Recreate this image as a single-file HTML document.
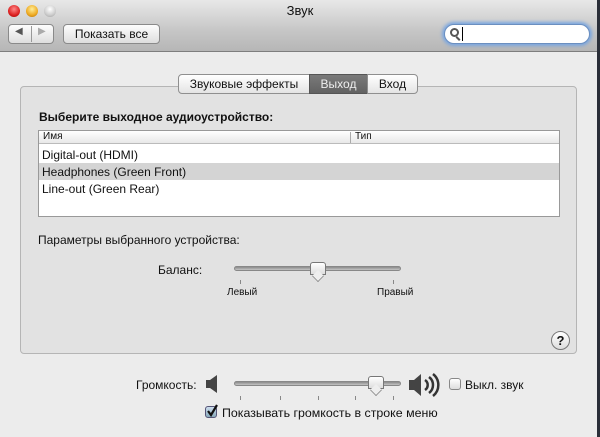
<!DOCTYPE html><html><head><meta charset="utf-8"><style>
*{margin:0;padding:0;box-sizing:border-box}
body{width:600px;height:437px;overflow:hidden;background:#ececec;font-family:"Liberation Sans","DejaVu Sans",sans-serif;font-size:12px;color:#111;position:relative}
.a{position:absolute;white-space:nowrap}
.tb{left:0;top:0;width:600px;height:52px;background:linear-gradient(#e8e8e8,#c6c6c6 60%,#b6b6b6);border-bottom:1px solid #7e7e7e}
.dot{width:12px;height:12px;border-radius:50%;top:5px}
.btn{background:linear-gradient(#fdfdfd,#dedede);border:1px solid #8a8a8a;border-radius:4px}
.grp{left:20px;top:86px;width:557px;height:268px;background:#e2e2e2;border:1px solid #b5b5b5;border-radius:4px}
.tab{top:74px;height:20px;line-height:18px;text-align:center;font-size:12px;background:linear-gradient(#fff,#e4e4e4);border:1px solid #8f8f8f}
.track{height:5px;background:linear-gradient(#8a8a8a,#c4c4c4);border-radius:3px;border:1px solid #888}
</style></head><body>
<div class="a tb"></div>
<div class="a dot" style="left:8px;background:radial-gradient(circle at 50% 35%,#f88,#d22 60%,#900)"></div>
<div class="a dot" style="left:26px;background:radial-gradient(circle at 50% 35%,#fe9,#ea2 60%,#a60)"></div>
<div class="a dot" style="left:44px;background:radial-gradient(circle at 50% 35%,#fff,#ccc 60%,#999)"></div>
<div class="a" style="left:0;width:600px;top:3px;text-align:center;font-size:13px">Звук</div>
<div class="a btn" style="left:8px;top:24px;width:46px;height:20px"></div>
<div class="a" style="left:31px;top:26px;width:1px;height:16px;background:#999"></div>
<div class="a" style="left:15px;top:26px;font-size:10px;color:#555">◀</div>
<div class="a" style="left:38px;top:26px;font-size:10px;color:#aaa">▶</div>
<div class="a btn" style="left:63px;top:24px;width:97px;height:20px;text-align:center;line-height:18px;font-size:12px">Показать все</div>
<div class="a" style="left:444px;top:24px;width:146px;height:20px;border-radius:10px;background:#fff;border:1px solid #6b8fc0;box-shadow:0 0 3px 2px #7aa6e0"></div>
<div class="a" style="left:450px;top:28px;width:9px;height:9px;border:2px solid #555;border-radius:50%"></div>
<div class="a" style="left:457px;top:36px;width:2px;height:5px;background:#555;transform:rotate(-45deg)"></div>
<div class="a" style="left:462px;top:27px;width:1px;height:14px;background:#000"></div>
<div class="a" style="left:597px;top:0;width:3px;height:437px;background:#2a2e38"></div>
<div class="a grp"></div>
<div class="a tab" style="left:178px;width:132px;border-radius:4px 0 0 4px">Звуковые эффекты</div>
<div class="a tab" style="left:309px;width:59px;background:linear-gradient(#7a7a7a,#626262);color:#eee;border-color:#555">Выход</div>
<div class="a tab" style="left:367px;width:51px;border-radius:0 4px 4px 0">Вход</div>
<div class="a" style="left:39px;top:110px;font-weight:bold">Выберите выходное аудиоустройство:</div>
<div class="a" style="left:38px;top:130px;width:522px;height:87px;background:#fff;border:1px solid #999"></div>
<div class="a" style="left:39px;top:131px;width:520px;height:13px;background:linear-gradient(#fff,#e8e8e8);border-bottom:1px solid #bbb"></div>
<div class="a" style="left:43px;top:131px;font-size:10px">Имя</div>
<div class="a" style="left:350px;top:132px;width:1px;height:11px;background:#aaa"></div>
<div class="a" style="left:355px;top:131px;font-size:10px">Тип</div>
<div class="a" style="left:42px;top:148px">Digital-out (HDMI)</div>
<div class="a" style="left:39px;top:163px;width:520px;height:17px;background:#d4d4d4"></div>
<div class="a" style="left:42px;top:165px">Headphones (Green Front)</div>
<div class="a" style="left:42px;top:182px">Line-out (Green Rear)</div>
<div class="a" style="left:38px;top:233px">Параметры выбранного устройства:</div>
<div class="a" style="left:158px;top:263px">Баланс:</div>
<div class="a track" style="left:234px;top:266px;width:167px"></div>
<div class="a" style="left:310px;top:262px;width:16px;height:13px;background:linear-gradient(#fff,#ddd);border:1px solid #777;border-radius:3px 3px 0 0"></div>
<div class="a" style="left:312px;top:270px;width:12px;height:12px;background:#eee;border-right:1px solid #777;border-bottom:1px solid #777;transform:rotate(45deg) scale(.7)"></div>
<div class="a" style="left:240px;top:280px;width:1px;height:4px;background:#888"></div>
<div class="a" style="left:393px;top:280px;width:1px;height:4px;background:#888"></div>
<div class="a" style="left:227px;top:287px;font-size:10px">Левый</div>
<div class="a" style="left:377px;top:287px;font-size:10px">Правый</div>
<div class="a" style="left:551px;top:331px;width:19px;height:19px;border-radius:50%;background:linear-gradient(#fff,#ddd);border:1px solid #777;text-align:center;line-height:17px;font-weight:bold;font-size:13px">?</div>
<div class="a" style="left:136px;top:378px">Громкость:</div>
<svg class="a" style="left:206px;top:375px" width="12" height="18"><path d="M0 5h4l7-5v18l-7-5H0z" fill="#444"/></svg>
<div class="a track" style="left:234px;top:381px;width:167px"></div>
<div class="a" style="left:368px;top:376px;width:16px;height:13px;background:linear-gradient(#fff,#ddd);border:1px solid #777;border-radius:3px 3px 0 0"></div>
<div class="a" style="left:370px;top:384px;width:12px;height:12px;background:#eee;border-right:1px solid #777;border-bottom:1px solid #777;transform:rotate(45deg) scale(.7)"></div>
<div class="a" style="left:240px;top:396px;width:1px;height:4px;background:#888"></div>
<div class="a" style="left:280px;top:396px;width:1px;height:4px;background:#888"></div>
<div class="a" style="left:318px;top:396px;width:1px;height:4px;background:#888"></div>
<div class="a" style="left:355px;top:396px;width:1px;height:4px;background:#888"></div>
<div class="a" style="left:393px;top:396px;width:1px;height:4px;background:#888"></div>
<svg class="a" style="left:409px;top:372px" width="32" height="26"><path d="M0 8h5l7-6v22l-7-6H0z" fill="#444"/><path d="M16 8a6 6 0 0 1 0 10M20 5a10 10 0 0 1 0 16M24 2a14 14 0 0 1 0 22" stroke="#333" stroke-width="2.5" fill="none"/></svg>
<div class="a" style="left:449px;top:378px;width:12px;height:12px;border:1px solid #888;border-radius:3px;background:linear-gradient(#fff,#ddd)"></div>
<div class="a" style="left:465px;top:378px">Выкл. звук</div>
<div class="a" style="left:205px;top:406px;width:12px;height:12px;border:1px solid #557;border-radius:3px;background:linear-gradient(#cde,#8ab)"></div>
<svg class="a" style="left:205px;top:403px" width="14" height="15"><path d="M3 8l3 4 6-10" stroke="#111" stroke-width="2.2" fill="none"/></svg>
<div class="a" style="left:222px;top:406px;font-size:12.4px">Показывать громкость в строке меню</div>
</body></html>
